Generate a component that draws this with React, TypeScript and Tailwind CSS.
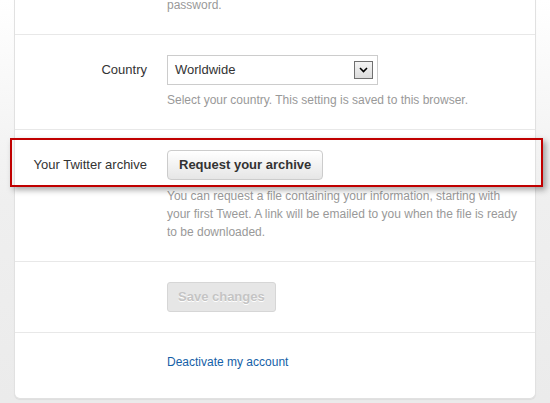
import React from "react";

function Row({
  label,
  children,
  last,
  className = "",
}: {
  label?: string;
  children: React.ReactNode;
  last?: boolean;
  className?: string;
}) {
  return (
    <div
      className={`relative flex ${last ? "pt-5 pb-[27px]" : "border-b border-[#e8e8e8] py-5"} ${className}`}
    >
      <div className="w-[132px] shrink-0 pt-[6px] text-right text-[#333]">
        {label}
      </div>
      <div className="ml-5 w-[360px]">{children}</div>
    </div>
  );
}

export default function App() {
  return (
    <div className="min-h-screen overflow-hidden bg-gradient-to-b from-white via-[#efefef] to-[#ebebeb] font-['Liberation_Sans',Arial,sans-serif] text-[13px] leading-[18px]">
      <div className="-mt-[4px] ml-[14px] w-[522px] rounded-b-[6px] border border-t-0 border-[#e1e1e1] bg-white shadow-[0_1px_1px_rgba(0,0,0,0.06)]">
        <div className="flex border-b border-[#e8e8e8] pb-5">
          <div className="ml-[152px] text-[12px] text-[#999]">password.</div>
        </div>

        <Row label="Country">
          <div className="flex h-[30px] w-[211px] items-center justify-between border border-[#ccc] bg-white pl-[7px] pr-[4px] text-[#333]">
            <span>Worldwide</span>
            <span className="flex h-[18px] w-[19px] items-center justify-center border border-[#707070] bg-gradient-to-b from-[#f4f4f4] to-[#dcdcdc]">
              <svg width="9" height="6" viewBox="0 0 9 6">
                <polyline
                  points="1,1 4.5,4.5 8,1"
                  fill="none"
                  stroke="#000"
                  strokeWidth="1.6"
                />
              </svg>
            </span>
          </div>
          <p className="mt-[6px] text-[12px] text-[#999]">
            Select your country. This setting is saved to this browser.
          </p>
        </Row>

        <Row label="Your Twitter archive">
          <button className="h-[30px] rounded-[4px] border border-[#ccc] bg-gradient-to-b from-white to-[#e6e6e6] px-[11px] font-bold text-[#333]">
            Request your archive
          </button>
          <p className="mt-[7px] text-[12px] text-[#999]">
            You can request a file containing your information, starting with
            <br />
            your first Tweet. A link will be emailed to you when the file is
            ready
            <br />
            to be downloaded.
          </p>
          <div className="pointer-events-none absolute left-[-5px] top-[8px] h-[49px] w-[533px] border-2 border-[#c00000] shadow-[3px_3px_6px_rgba(0,0,0,0.35)]" />
        </Row>

        <Row>
          <button className="h-[30px] rounded-[3px] border border-[#d6d6d6] bg-[#e6e6e6] px-[10px] font-bold text-[#c4c4c4] [text-shadow:0_1px_0_#fff]">
            Save changes
          </button>
        </Row>

        <Row last>
          <a href="#" className="text-[12px] text-[#155fa7]">
            Deactivate my account
          </a>
        </Row>
      </div>
    </div>
  );
}
